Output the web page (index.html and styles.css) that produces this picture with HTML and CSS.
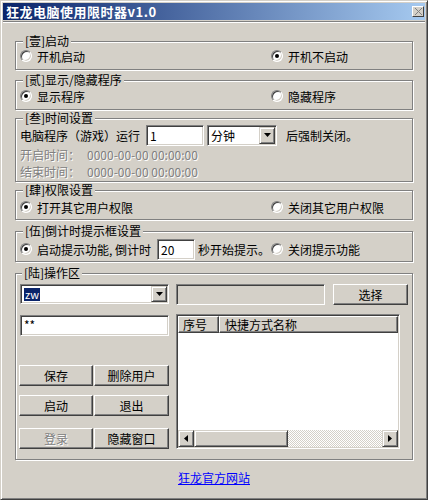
FILE: index.html
```html
<!DOCTYPE html>
<html lang="zh-CN">
<head>
<meta charset="utf-8">
<title>狂龙电脑使用限时器v1.0</title>
<link rel="stylesheet" href="styles.css">
</head>
<body>
<div class="window">
  <div class="titlebar">
    <span class="title">狂龙电脑使用限时器v1.0</span>
    <span class="close"><svg width="8" height="7" viewBox="0 0 8 7"><path d="M1 0h1v1h1v1h1v1h1V2h1V1h1V0h1v1H7v1H6v1H5v1h1v1h1v1h1v1H7V6H6V5H5V4H4v1H3v1H2v1H1V6h1V5h1V4h1V3H3V2H2V1H1z" fill="#808080"/></svg></span>
  </div>
  <div class="sep"></div>
  <div class="content">
    <div class="group g1">
      <div class="gtitle">[壹]启动</div>
      <div class="cols">
        <div class="opt"><span class="radio"></span>开机启动</div>
        <div class="opt"><span class="radio on"></span>开机不启动</div>
      </div>
    </div>
    <div class="group g2">
      <div class="gtitle">[贰]显示/隐藏程序</div>
      <div class="cols">
        <div class="opt"><span class="radio on"></span>显示程序</div>
        <div class="opt"><span class="radio"></span>隐藏程序</div>
      </div>
    </div>
    <div class="group g3">
      <div class="gtitle">[叁]时间设置</div>
      <div class="trow">
        <span class="runlbl">电脑程序（游戏）运行</span>
        <div class="field w58">1</div>
        <div class="combo w70"><span class="ctext">分钟</span><span class="drop"><svg width="7" height="4" viewBox="0 0 7 4"><path d="M0 0h7L3.5 4z" fill="#000"/></svg></span></div>
        <span class="after">后强制关闭。</span>
      </div>
      <div class="drow"><span class="dlbl">开启时间：</span><span>0000-00-00 00:00:00</span></div>
      <div class="drow"><span class="dlbl">结束时间：</span><span>0000-00-00 00:00:00</span></div>
    </div>
    <div class="group g4">
      <div class="gtitle">[肆]权限设置</div>
      <div class="cols">
        <div class="opt"><span class="radio on"></span>打开其它用户权限</div>
        <div class="opt"><span class="radio"></span>关闭其它用户权限</div>
      </div>
    </div>
    <div class="group g5">
      <div class="gtitle">[伍]倒计时提示框设置</div>
      <div class="cols tall">
        <div class="opt"><span class="radio on"></span><span class="cdlbl">启动提示功能, 倒计时</span><div class="field w38">20</div><span class="sec">秒开始提示。</span></div>
        <div class="opt"><span class="radio"></span>关闭提示功能</div>
      </div>
    </div>
    <div class="group g6">
      <div class="gtitle">[陆]操作区</div>
      <div class="ops">
        <div class="lcol">
          <div class="combo user"><span class="ctext"><span class="sel">zw</span></span><span class="drop"><svg width="7" height="4" viewBox="0 0 7 4"><path d="M0 0h7L3.5 4z" fill="#000"/></svg></span></div>
          <div class="field pwd">**</div>
          <div class="btnrow r1"><div class="btn">保存</div><div class="btn">删除用户</div></div>
          <div class="btnrow r2"><div class="btn">启动</div><div class="btn">退出</div></div>
          <div class="btnrow r3"><div class="btn disabled">登录</div><div class="btn">隐藏窗口</div></div>
        </div>
        <div class="rcol">
          <div class="prow">
            <div class="field off w149"></div>
            <div class="btn choose">选择</div>
          </div>
          <div class="listview">
            <div class="lvhead"><div class="hcell h1">序号</div><div class="hcell h2">快捷方式名称</div></div>
            <div class="lvbody"></div>
            <div class="hscroll">
              <div class="sbtn"><svg width="4" height="7" viewBox="0 0 4 7"><path d="M4 0v7L0 3.5z" fill="#000"/></svg></div>
              <div class="thumb"></div>
              <div class="track"></div>
              <div class="sbtn"><svg width="4" height="7" viewBox="0 0 4 7"><path d="M0 0v7L4 3.5z" fill="#000"/></svg></div>
            </div>
          </div>
        </div>
      </div>
    </div>
  </div>
  <div class="footer"><a class="link" href="#">狂龙官方网站</a></div>
</div>
</body>
</html>
```
FILE: styles.css
```css
* { box-sizing: border-box; }
body {
  margin: 0;
  background: #d4d0c8;
  font-family: "Noto Sans CJK SC", sans-serif;
  font-size: 12px;
  color: #000;
}
.window {
  width: 428px;
  height: 500px;
  border: 1px solid;
  border-color: #d4d0c8 #404040 #404040 #d4d0c8;
  box-shadow: inset 1px 1px #fff, inset -1px -1px #808080;
  padding: 2px;
  background: #d4d0c8;
}
.titlebar {
  height: 17px;
  background: linear-gradient(90deg, #0a246a, #a6caf0);
  display: flex;
  align-items: center;
  justify-content: space-between;
  padding: 0 1px 0 3px;
}
.title {
  color: #fff;
  font-weight: bold;
  font-size: 13px;
  line-height: 17px;
  letter-spacing: 0.5px;
}
.close {
  width: 12px;
  height: 11px;
  background: #d4d0c8;
  border: 1px solid;
  border-color: #fff #404040 #404040 #fff;
  display: flex;
  align-items: center;
  justify-content: center;
}
.sep {
  margin-top: 1px;
  border-top: 1px solid #808080;
  border-bottom: 1px solid #fff;
}
.content { padding: 0 12px; }
.group {
  border: 1px solid #808080;
  box-shadow: inset 1px 1px #fff, 1px 1px #fff;
  padding-left: 4px;
  --pt: 5px;
}
.gtitle {
  width: fit-content;
  margin: -8px 0 calc(var(--pt) - 6px) 3px;
  padding: 0 2px;
  height: 14px;
  line-height: 14px;
  background: #d4d0c8;
  white-space: nowrap;
}
.g1 { margin-top: 18px; height: 29px; --pt: 5px; }
.g2 { margin-top: 10px; height: 30px; --pt: 6px; }
.g3 { margin-top: 8px; height: 64px; --pt: 5px; }
.g4 { margin-top: 8px; height: 30px; --pt: 7px; }
.g5 { margin-top: 11px; height: 31px; --pt: 6px; }
.g6 { margin-top: 11px; height: 187px; padding-left: 3px; --pt: 10px; }

.cols {
  display: grid;
  grid-template-columns: 251px 1fr;
  align-items: center;
}
.cols.tall .opt { height: 22px; }
.opt {
  display: flex;
  align-items: center;
  height: 18px;
  white-space: nowrap;
}
.radio {
  flex: none;
  width: 12px;
  height: 12px;
  border-radius: 50%;
  background: #fff;
  border: 1px solid;
  border-color: #808080 #fff #fff #808080;
  box-shadow: inset 1px 1px #404040, inset -1px -1px #d4d0c8;
  margin-right: 5px;
  position: relative;
}
.radio.on::after {
  content: "";
  position: absolute;
  left: 3px;
  top: 3px;
  width: 4px;
  height: 4px;
  border-radius: 50%;
  background: #000;
}

.field {
  height: 21px;
  border: 1px solid;
  border-color: #808080 #fff #fff #808080;
  box-shadow: inset 1px 1px #404040, inset -1px -1px #d4d0c8;
  background: #fff;
  padding: 2px 3px;
  line-height: 15px;
  white-space: nowrap;
}
.field.off { background: #d4d0c8; }
.w58 { width: 58px; }
.w38 { width: 38px; }
.w149 { width: 149px; }

.combo {
  height: 21px;
  display: flex;
  border: 1px solid;
  border-color: #808080 #fff #fff #808080;
  box-shadow: inset 1px 1px #404040, inset -1px -1px #d4d0c8;
  background: #fff;
  padding: 1px;
}
.w70 { width: 70px; margin-left: 3px; }
.ctext {
  flex: 1;
  padding-left: 2px;
  line-height: 17px;
  display: flex;
  align-items: center;
}
.drop {
  width: 16px;
  flex: none;
  background: #d4d0c8;
  border: 1px solid;
  border-color: #d4d0c8 #404040 #404040 #d4d0c8;
  box-shadow: inset 1px 1px #fff, inset -1px -1px #808080;
  display: flex;
  align-items: center;
  justify-content: center;
}

.trow {
  display: flex;
  align-items: center;
  height: 22px;
}
.runlbl { width: 126px; white-space: nowrap; }
.after { margin-left: 9px; }
.drow {
  display: flex;
  align-items: center;
  height: 17px;
  color: #808080;
  text-shadow: 1px 1px 0 #fff;
}
.dlbl { width: 67px; }

.cdlbl { width: 120px; }
.sec { margin-left: 3px; }

.ops { display: flex; gap: 7px; }
.lcol { width: 150px; display: flex; flex-direction: column; }
.combo.user { width: 149px; height: 20px; margin-left: 1px; }
.sel {
  background: #0a246a;
  color: #fff;
  line-height: 13px;
  padding: 0 1px;
  font-size: 11px;
}
.pwd { width: 149px; margin: 11px 0 0 1px; line-height: 14px; }
.btnrow {
  display: grid;
  grid-template-columns: 74px 75px;
  gap: 1px;
}
.r1 { margin-top: 29px; }
.r2 { margin-top: 9px; }
.r3 { margin-top: 12px; }
.btn {
  height: 21px;
  background: #d4d0c8;
  border: 1px solid;
  border-color: #fff #404040 #404040 #fff;
  box-shadow: inset -1px -1px #808080, inset 1px 1px #d4d0c8;
  display: flex;
  align-items: center;
  justify-content: center;
  white-space: nowrap;
}
.btn.disabled { color: #808080; text-shadow: 1px 1px 0 #fff; }

.rcol { width: 233px; }
.prow { display: flex; align-items: center; }
.choose { width: 75px; margin-left: 8px; }

.listview {
  margin-top: 9px;
  width: 224px;
  height: 135px;
  border: 1px solid;
  border-color: #808080 #fff #fff #808080;
  box-shadow: inset 1px 1px #404040, inset -1px -1px #d4d0c8;
  background: #fff;
  padding: 1px;
  display: flex;
  flex-direction: column;
}
.lvhead { display: flex; height: 17px; }
.hcell {
  background: #d4d0c8;
  border: 1px solid;
  border-color: #fff #404040 #404040 #fff;
  box-shadow: inset -1px -1px #808080;
  padding-left: 4px;
  line-height: 15px;
  white-space: nowrap;
}
.h1 { width: 41px; }
.h2 { flex: 1; padding-left: 5px; }
.lvbody { flex: 1; }
.hscroll { display: flex; height: 17px; }
.sbtn, .thumb {
  background: #d4d0c8;
  border: 1px solid;
  border-color: #d4d0c8 #404040 #404040 #d4d0c8;
  box-shadow: inset 1px 1px #fff, inset -1px -1px #808080;
}
.sbtn {
  width: 16px;
  display: flex;
  align-items: center;
  justify-content: center;
}
.thumb { width: 94px; }
.track {
  flex: 1;
  background: repeating-conic-gradient(#fff 0 25%, #d4d0c8 0 50%) 0 0 / 2px 2px;
}

.footer {
  padding-top: 12px;
  text-align: center;
  line-height: 12px;
}
.link { color: #0000ff; text-decoration: underline; }
```
